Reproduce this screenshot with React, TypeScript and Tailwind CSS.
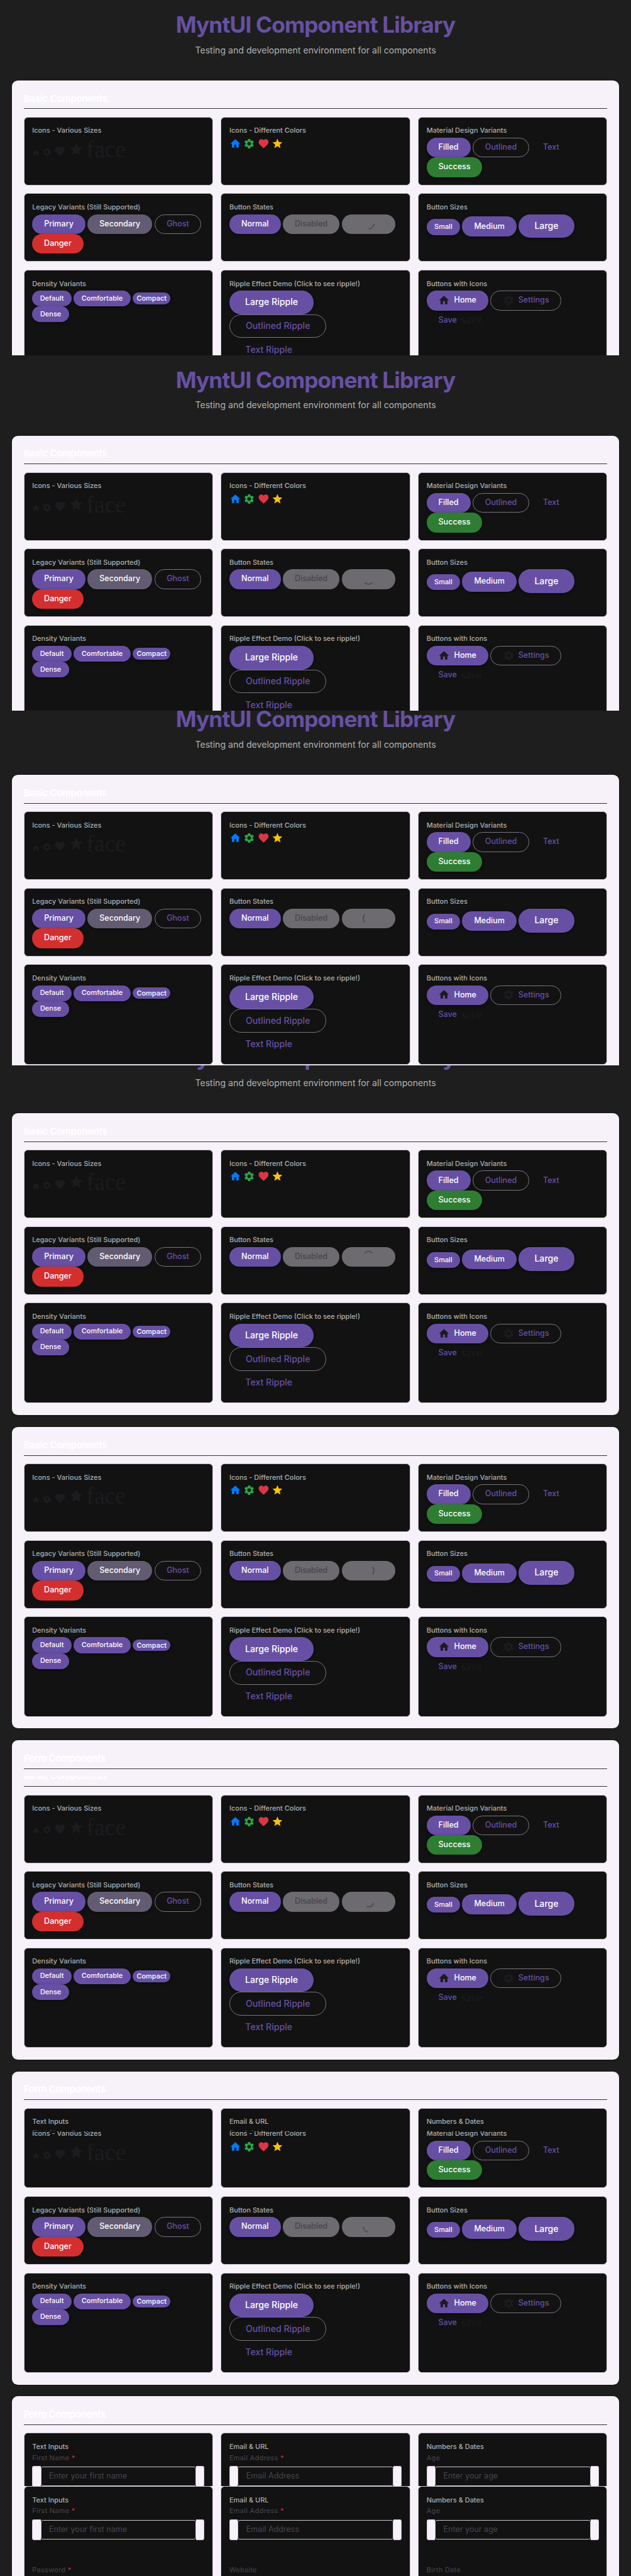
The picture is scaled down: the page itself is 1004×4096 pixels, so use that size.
import type { ReactNode } from "react";
import { MdFavorite, MdHome, MdSettings, MdStar } from "react-icons/md";

const SHADOW = "shadow-[0_1px_2px_rgba(0,0,0,0.3),0_2px_6px_2px_rgba(0,0,0,0.15)]";

const variants = {
  filled: "bg-[#6750a4] text-white " + SHADOW,
  secondary: "bg-[#625b71] text-white " + SHADOW,
  success: "bg-[#2e7d32] text-white " + SHADOW,
  danger: "bg-[#d32f2f] text-white " + SHADOW,
  outlined: "border border-[#79747e] text-[#6750a4]",
  text: "text-[#6750a4]",
  disabled: "bg-[#6d6a70] text-[#49454f]",
};

const sizes = {
  compact: "h-6 text-[14px]",
  small: "h-8 pb-px text-[14px]",
  medium: "h-10 pb-px text-[16px]",
  large: "h-12 pb-px text-[18px]",
};

type ButtonProps = {
  variant?: keyof typeof variants;
  size?: keyof typeof sizes;
  className: string;
  children: ReactNode;
};

function Button({ variant = "filled", size = "medium", className, children }: ButtonProps) {
  return (
    <button
      className={`inline-flex shrink-0 items-center justify-center gap-2 rounded-[20px] font-medium leading-none whitespace-nowrap ${variants[variant]} ${sizes[size]} ${className}`}
    >
      {children}
    </button>
  );
}

function Card({ title, className, children }: { title: string; className: string; children: ReactNode }) {
  return (
    <div className={`rounded-lg border border-[#cac4d0] bg-[#121212] p-4 ${className}`}>
      <h3 className="mb-1 text-[14px] leading-[21px] font-medium whitespace-nowrap text-[#b0b0b0]">{title}</h3>
      {children}
    </div>
  );
}

function Row({ children }: { children: ReactNode }) {
  return <div className="flex gap-x-[4.4px]">{children}</div>;
}

function Section({ title, children }: { title: string; children: ReactNode }) {
  return (
    <section className="rounded-xl bg-[#f7f2fa] p-6 shadow-[0_1px_3px_rgba(0,0,0,0.3)]">
      <h2 className="mb-4 h-[34px] border-b border-[#333333] text-[19.2px] leading-[25px] font-semibold tracking-[-0.3px] text-white">
        {title}
      </h2>
      <div className="grid grid-cols-3 gap-4">{children}</div>
    </section>
  );
}

function Spinner({ angle }: { angle: number }) {
  return (
    <svg className="size-6" viewBox="0 0 24 24" fill="none">
      <path
        d="M23 12A11 11 0 0 1 12 23"
        stroke="#49454f"
        strokeWidth="2"
        transform={`rotate(${angle} 12 12)`}
      />
    </svg>
  );
}

function Field({ label, placeholder, required = false }: { label: string; placeholder: string; required?: boolean }) {
  return (
    <div className="h-[119px]">
      <div className="mb-1 h-[21px] text-[14px] leading-[16px] tracking-[0.4px] text-[#49454f]">
        {label}
        {required && <span className="text-[#d32f2f]"> *</span>}
      </div>
      <div className="flex h-[42px] items-center">
        <div className="h-full w-[17px] rounded-l border border-r-0 border-[#cac4d0] bg-[#f7f2fa]" />
        <div className="flex h-10 flex-1 items-center rounded border border-[#cac4d0] px-4 text-[16px] text-[#49454f]">
          {placeholder}
        </div>
        <div className="h-full w-[17px] rounded-r border border-l-0 border-[#cac4d0] bg-[#f7f2fa]" />
      </div>
    </div>
  );
}

function Header() {
  return (
    <header className="flex h-[163px] flex-col items-center pt-6">
      <h1 className="text-[45px] leading-[54px] font-bold tracking-[-1.12px] text-[#6750a4]">
        MyntUI Component Library
      </h1>
      <p className="mt-3 text-[18px] leading-6 text-[#b0b0b0]">
        Testing and development environment for all components
      </p>
    </header>
  );
}

function BasicComponents({ spin }: { spin: number }) {
  return (
    <Section title="Basic Components">
      <Card title="Icons - Various Sizes" className="h-[139px]">
        <div className="flex items-baseline gap-x-[4.5px] text-[#1d1b20]">
          <MdHome className="size-4" />
          <MdSettings className="size-5" />
          <MdFavorite className="size-6" />
          <MdStar className="size-8" />
          <span className="font-['Liberation_Serif',serif] text-[48px] leading-none">face</span>
        </div>
      </Card>
      <Card title="Icons - Different Colors" className="h-[139px]">
        <div className="flex gap-x-[4.5px]">
          <MdHome className="size-6 text-[#007bff]" />
          <MdSettings className="size-6 text-[#28a745]" />
          <MdFavorite className="size-6 text-[#dc3545]" />
          <MdStar className="size-6 text-[#ffc107]" />
        </div>
      </Card>
      <Card title="Material Design Variants" className="h-[139px]">
        <Row>
          <Button className="w-[89px]">Filled</Button>
          <Button variant="outlined" className="w-[115px]">Outlined</Button>
          <Button variant="text" className="w-[80px]">Text</Button>
        </Row>
        <Row>
          <Button variant="success" className="w-[113px]">Success</Button>
        </Row>
      </Card>

      <Card title="Legacy Variants (Still Supported)" className="h-[139px]">
        <Row>
          <Button className="w-[108px]">Primary</Button>
          <Button variant="secondary" className="w-[131px]">Secondary</Button>
          <Button variant="outlined" className="w-[95.5px]">Ghost</Button>
        </Row>
        <Row>
          <Button variant="danger" className="w-[104px]">Danger</Button>
        </Row>
      </Card>
      <Card title="Button States" className="h-[139px]">
        <Row>
          <Button className="w-[104px]">Normal</Button>
          <Button variant="disabled" className="w-[115px]">Disabled</Button>
          <Button variant="disabled" className="w-[109px]">
            <Spinner angle={spin} />
          </Button>
        </Row>
      </Card>
      <Card title="Button Sizes" className="h-[139px]">
        <Row>
          <Button size="small" className="mt-[10px] w-[68px]">Small</Button>
          <Button className="mt-[5px] w-[110px]">Medium</Button>
          <Button size="large" className="w-[113px] rounded-[24px]">Large</Button>
        </Row>
      </Card>

      <Card title="Density Variants" className="h-[203px]">
        <Row>
          <Button size="small" className="w-[80px]">Default</Button>
          <Button size="small" className="w-[115px]">Comfortable</Button>
          <Button size="compact" className="mt-1 w-[77px]">Compact</Button>
        </Row>
        <Row>
          <Button size="small" className="w-[75px]">Dense</Button>
        </Row>
      </Card>
      <Card title="Ripple Effect Demo (Click to see ripple!)" className="h-[203px]">
        <div className="flex flex-col items-start">
          <Button size="large" className="w-[171px] rounded-[24px]">Large Ripple</Button>
          <Button size="large" variant="outlined" className="w-[197px] rounded-[24px]">Outlined Ripple</Button>
          <Button size="large" variant="text" className="w-[160px]">Text Ripple</Button>
        </div>
      </Card>
      <Card title="Buttons with Icons" className="h-[203px]">
        <Row>
          <Button className="w-[125px]">
            <MdHome className="size-6 text-[#1d1b20]" />
            Home
          </Button>
          <Button variant="outlined" className="w-[144px]">
            <MdSettings className="size-6 text-[#1d1b20]" />
            Settings
          </Button>
        </Row>
        <Row>
          <Button variant="text" className="px-6">
            Save
            <span className="font-['Liberation_Serif',serif] text-[24px] font-normal text-[#1d1b20]">save</span>
          </Button>
        </Row>
      </Card>
    </Section>
  );
}

function FormComponents() {
  return (
    <Section title="Form Components">
      <Card title="Text Inputs" className="h-[300px]">
        <Field label="First Name" placeholder="Enter your first name" required />
        <Field label="Password" placeholder="Enter your password" required />
      </Card>
      <Card title="Email & URL" className="h-[300px]">
        <Field label="Email Address" placeholder="Email Address" required />
        <Field label="Website" placeholder="Website" />
      </Card>
      <Card title="Numbers & Dates" className="h-[300px]">
        <Field label="Age" placeholder="Enter your age" />
        <Field label="Birth Date" placeholder="Birth Date" />
      </Card>
    </Section>
  );
}

type Frame = { offset: number; spin: number; header?: boolean; basic?: boolean; form?: boolean };

/* Each frame is a 720px window on the library; offset shifts its first visible section. */
const frames: Frame[] = [
  { offset: 0, spin: 0, header: true, basic: true },
  { offset: 0, spin: 45, header: true, basic: true },
  { offset: -32, spin: 135, header: true, basic: true },
  { offset: -66, spin: 225, header: true, basic: true },
  { offset: 13, spin: 315, basic: true, form: true },
  { offset: -36, spin: 20, basic: true, form: true },
  { offset: -97, spin: 90, basic: true, form: true },
  { offset: -74, spin: 0, form: true },
];

export default function App() {
  return (
    <div className="h-[4096px] w-[1004px] overflow-hidden bg-[#1e1e1e] font-['Inter',sans-serif]">
      <div className="w-[1280px] [zoom:0.784375]">
        {frames.map((frame, i) => (
          <div key={i} className="h-[720px] overflow-hidden px-6">
            <div style={{ marginTop: frame.offset }}>
              {frame.header && <Header />}
              <div className="flex flex-col gap-6">
                {frame.basic && <BasicComponents spin={frame.spin} />}
                {frame.form && <FormComponents />}
              </div>
            </div>
          </div>
        ))}
      </div>
    </div>
  );
}
